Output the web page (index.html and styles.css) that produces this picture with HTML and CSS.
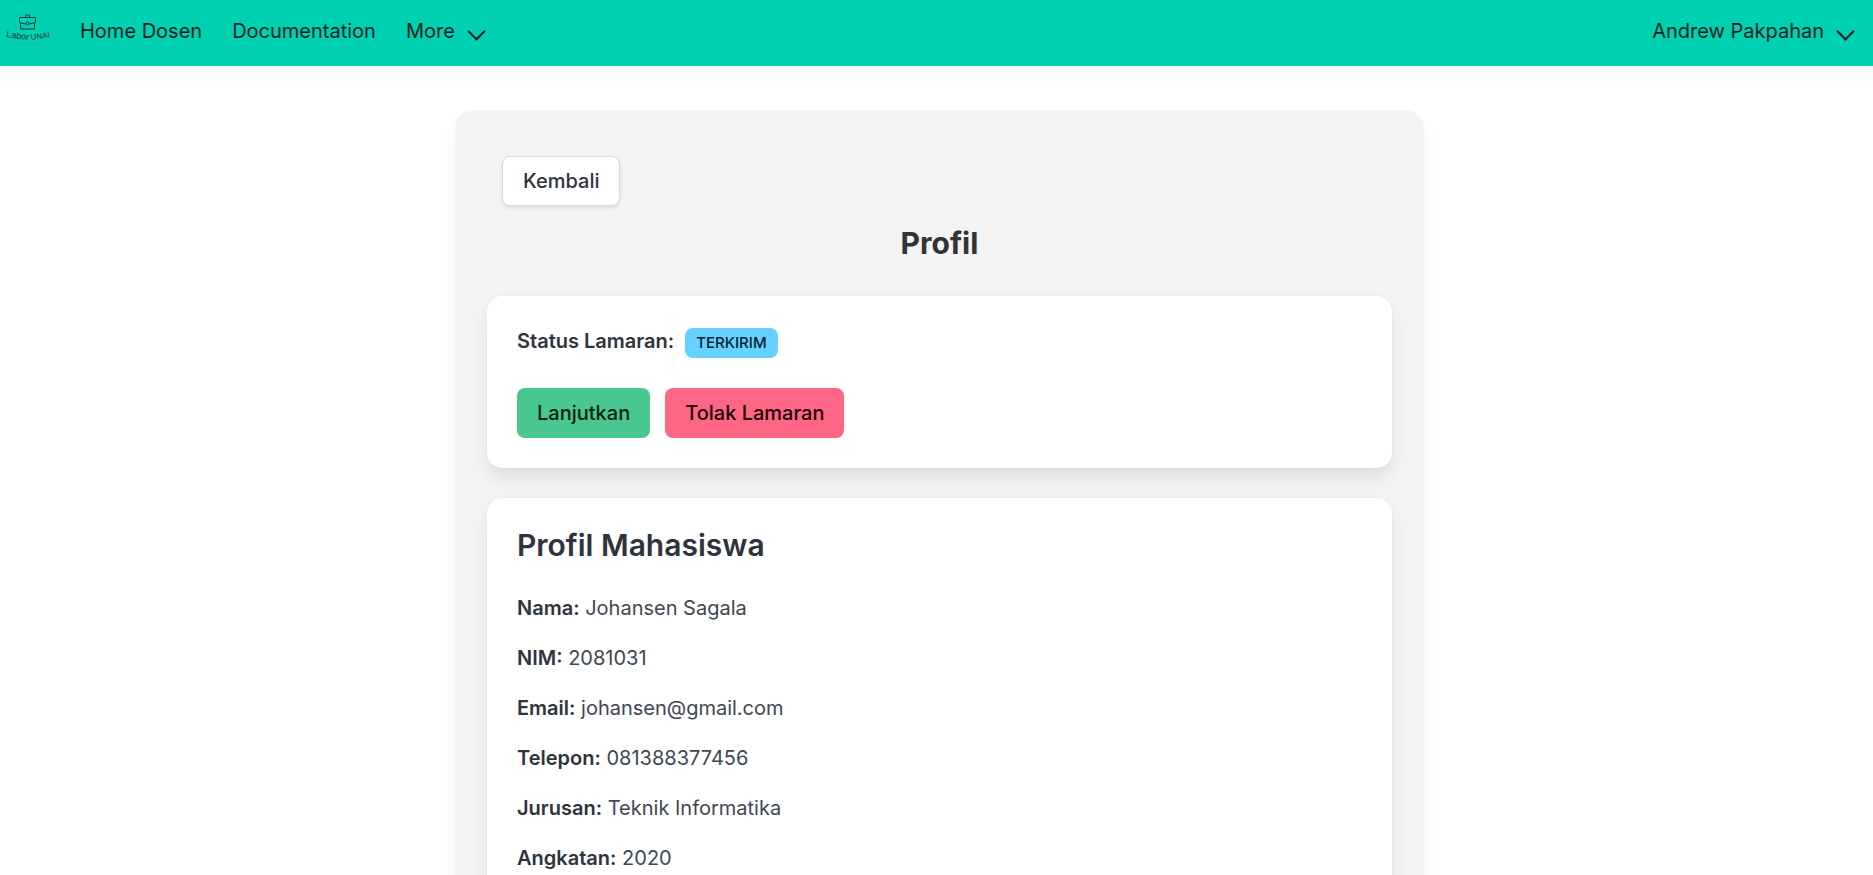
FILE: index.html
```html
<!DOCTYPE html>
<html lang="id">
<head>
  <meta charset="UTF-8">
  <meta name="viewport" content="width=device-width, initial-scale=1.0">
  <title>Profil - Labor UNAI</title>
  <link rel="stylesheet" href="styles.css">
</head>
<body>
  <nav class="navbar">
    <a class="navbar-logo" href="#" aria-label="Labor UNAI">
      <svg viewBox="0 0 50 38" width="50" height="38">
        <g fill="none" stroke="#063b35" stroke-width="1">
          <path d="M21.500 7.500v-2.500h4v2.500" />
          <path d="M15.500 7.500h16v5l-6 1.500M15.500 7.500v5l6 1.500" />
          <path d="M16.500 13v6h14v-6" />
          <circle cx="23.500" cy="13.500" r="1.500" />
        </g>
        <g class="logo-text">
          <text x="2" y="27" font-size="9" transform="rotate(8 2 27)">Labor</text>
          <text x="27" y="30" font-size="8" transform="rotate(-8 27 30)">UNAI</text>
        </g>
        <path d="M9 34h29" stroke="#12b8a0" stroke-width="1" stroke-dasharray="3 1" />
      </svg>
    </a>
    <a class="navbar-item" href="#">Home Dosen</a>
    <a class="navbar-item" href="#">Documentation</a>
    <a class="navbar-item navbar-link" href="#">More</a>
    <a class="navbar-item navbar-link navbar-user" href="#">Andrew Pakpahan</a>
  </nav>

  <main class="container">
    <div class="panel">
      <button class="button is-back" type="button">Kembali</button>
      <h1 class="title page-title">Profil</h1>

      <section class="box">
        <div class="status">
          <strong>Status Lamaran:</strong>
          <span class="tag">TERKIRIM</span>
        </div>
        <div class="buttons">
          <button class="button is-success" type="button">Lanjutkan</button>
          <button class="button is-danger" type="button">Tolak Lamaran</button>
        </div>
      </section>

      <section class="box">
        <h2 class="title">Profil Mahasiswa</h2>
        <p><strong>Nama:</strong> Johansen Sagala</p>
        <p><strong>NIM:</strong> 2081031</p>
        <p><strong>Email:</strong> johansen@gmail.com</p>
        <p><strong>Telepon:</strong> 081388377456</p>
        <p><strong>Jurusan:</strong> Teknik Informatika</p>
        <p><strong>Angkatan:</strong> 2020</p>
      </section>
    </div>
  </main>
</body>
</html>
```
FILE: styles.css
```css
*,
*::after {
  box-sizing: border-box;
}

html {
  overflow-x: hidden;
  scrollbar-width: none;
}

body {
  margin: 0;
  background: #fff;
  color: #404654;
  font-family: Inter, sans-serif;
  font-size: 20px;
  line-height: 30px;
}

h1, h2, p {
  margin: 0;
}

strong {
  color: #2e333d;
  font-weight: 600;
}

.navbar {
  display: flex;
  align-items: stretch;
  height: 66px;
  background: #00d1b2;
}

.navbar-logo {
  display: flex;
  align-items: flex-start;
  padding: 10px 11px 0 4px;
}

.logo-text {
  fill: #063b35;
  font-family: "Liberation Sans", sans-serif;
}

.navbar-item {
  display: flex;
  align-items: center;
  padding: 0 15px 4px;
  color: #001f1b;
  text-decoration: none;
}

.navbar-link::after {
  content: "";
  width: 13px;
  height: 13px;
  margin-left: 15px;
  border: solid #001f1b;
  border-width: 0 2px 2px 0;
  transform: rotate(45deg);
}

.navbar-user {
  margin-left: auto;
  padding-right: 21px;
}

.container {
  display: flex;
  justify-content: center;
  padding: 45px 0 45px 6px;
}

.panel {
  width: 100%;
  max-width: 967px;
  padding: 45px 31px 30px;
  border-radius: 16px;
  background: #f4f4f4;
  box-shadow: 0 10px 20px -2px rgba(10, 10, 10, 0.07), 0 0 0 1px rgba(10, 10, 10, 0.02);
}

.title {
  margin-bottom: 31px;
  color: #2e333d;
  font-size: 30px;
  font-weight: 600;
  line-height: 34px;
}

.page-title {
  margin: 20px 0 36px;
  color: #333;
  font-weight: 700;
  text-align: center;
}

.box {
  padding: 30px;
  border-radius: 15px;
  background: #fff;
  box-shadow: 0 10px 20px -2px rgba(10, 10, 10, 0.1), 0 0 0 1px rgba(10, 10, 10, 0.02);
}

.box + .box {
  margin-top: 30px;
}

.box p + p {
  margin-top: 20px;
}

.status {
  display: flex;
  gap: 11px;
  margin-bottom: 32px;
}

.tag {
  margin-top: 2px;
  margin-bottom: -2px;
  padding: 0 11px;
  border-radius: 8px;
  background: #66d1ff;
  color: #002433;
  font-size: 15px;
  font-weight: 500;
}

.buttons {
  display: flex;
  gap: 15px;
}

.button {
  height: 50px;
  padding: 0 20px;
  border: 0;
  border-radius: 8px;
  font-family: inherit;
  font-size: 20px;
  font-weight: 500;
  cursor: pointer;
}

.is-back {
  display: block;
  margin-left: 15px;
  border: 1px solid #d6d9e0;
  background: #fff;
  color: #2e333d;
  box-shadow: 0 2px 4px rgba(0, 0, 0, 0.1);
}

.is-success {
  background: #48c78e;
  color: #0a1f15;
}

.is-danger {
  background: #ff6685;
  color: #1a0006;
}
```
